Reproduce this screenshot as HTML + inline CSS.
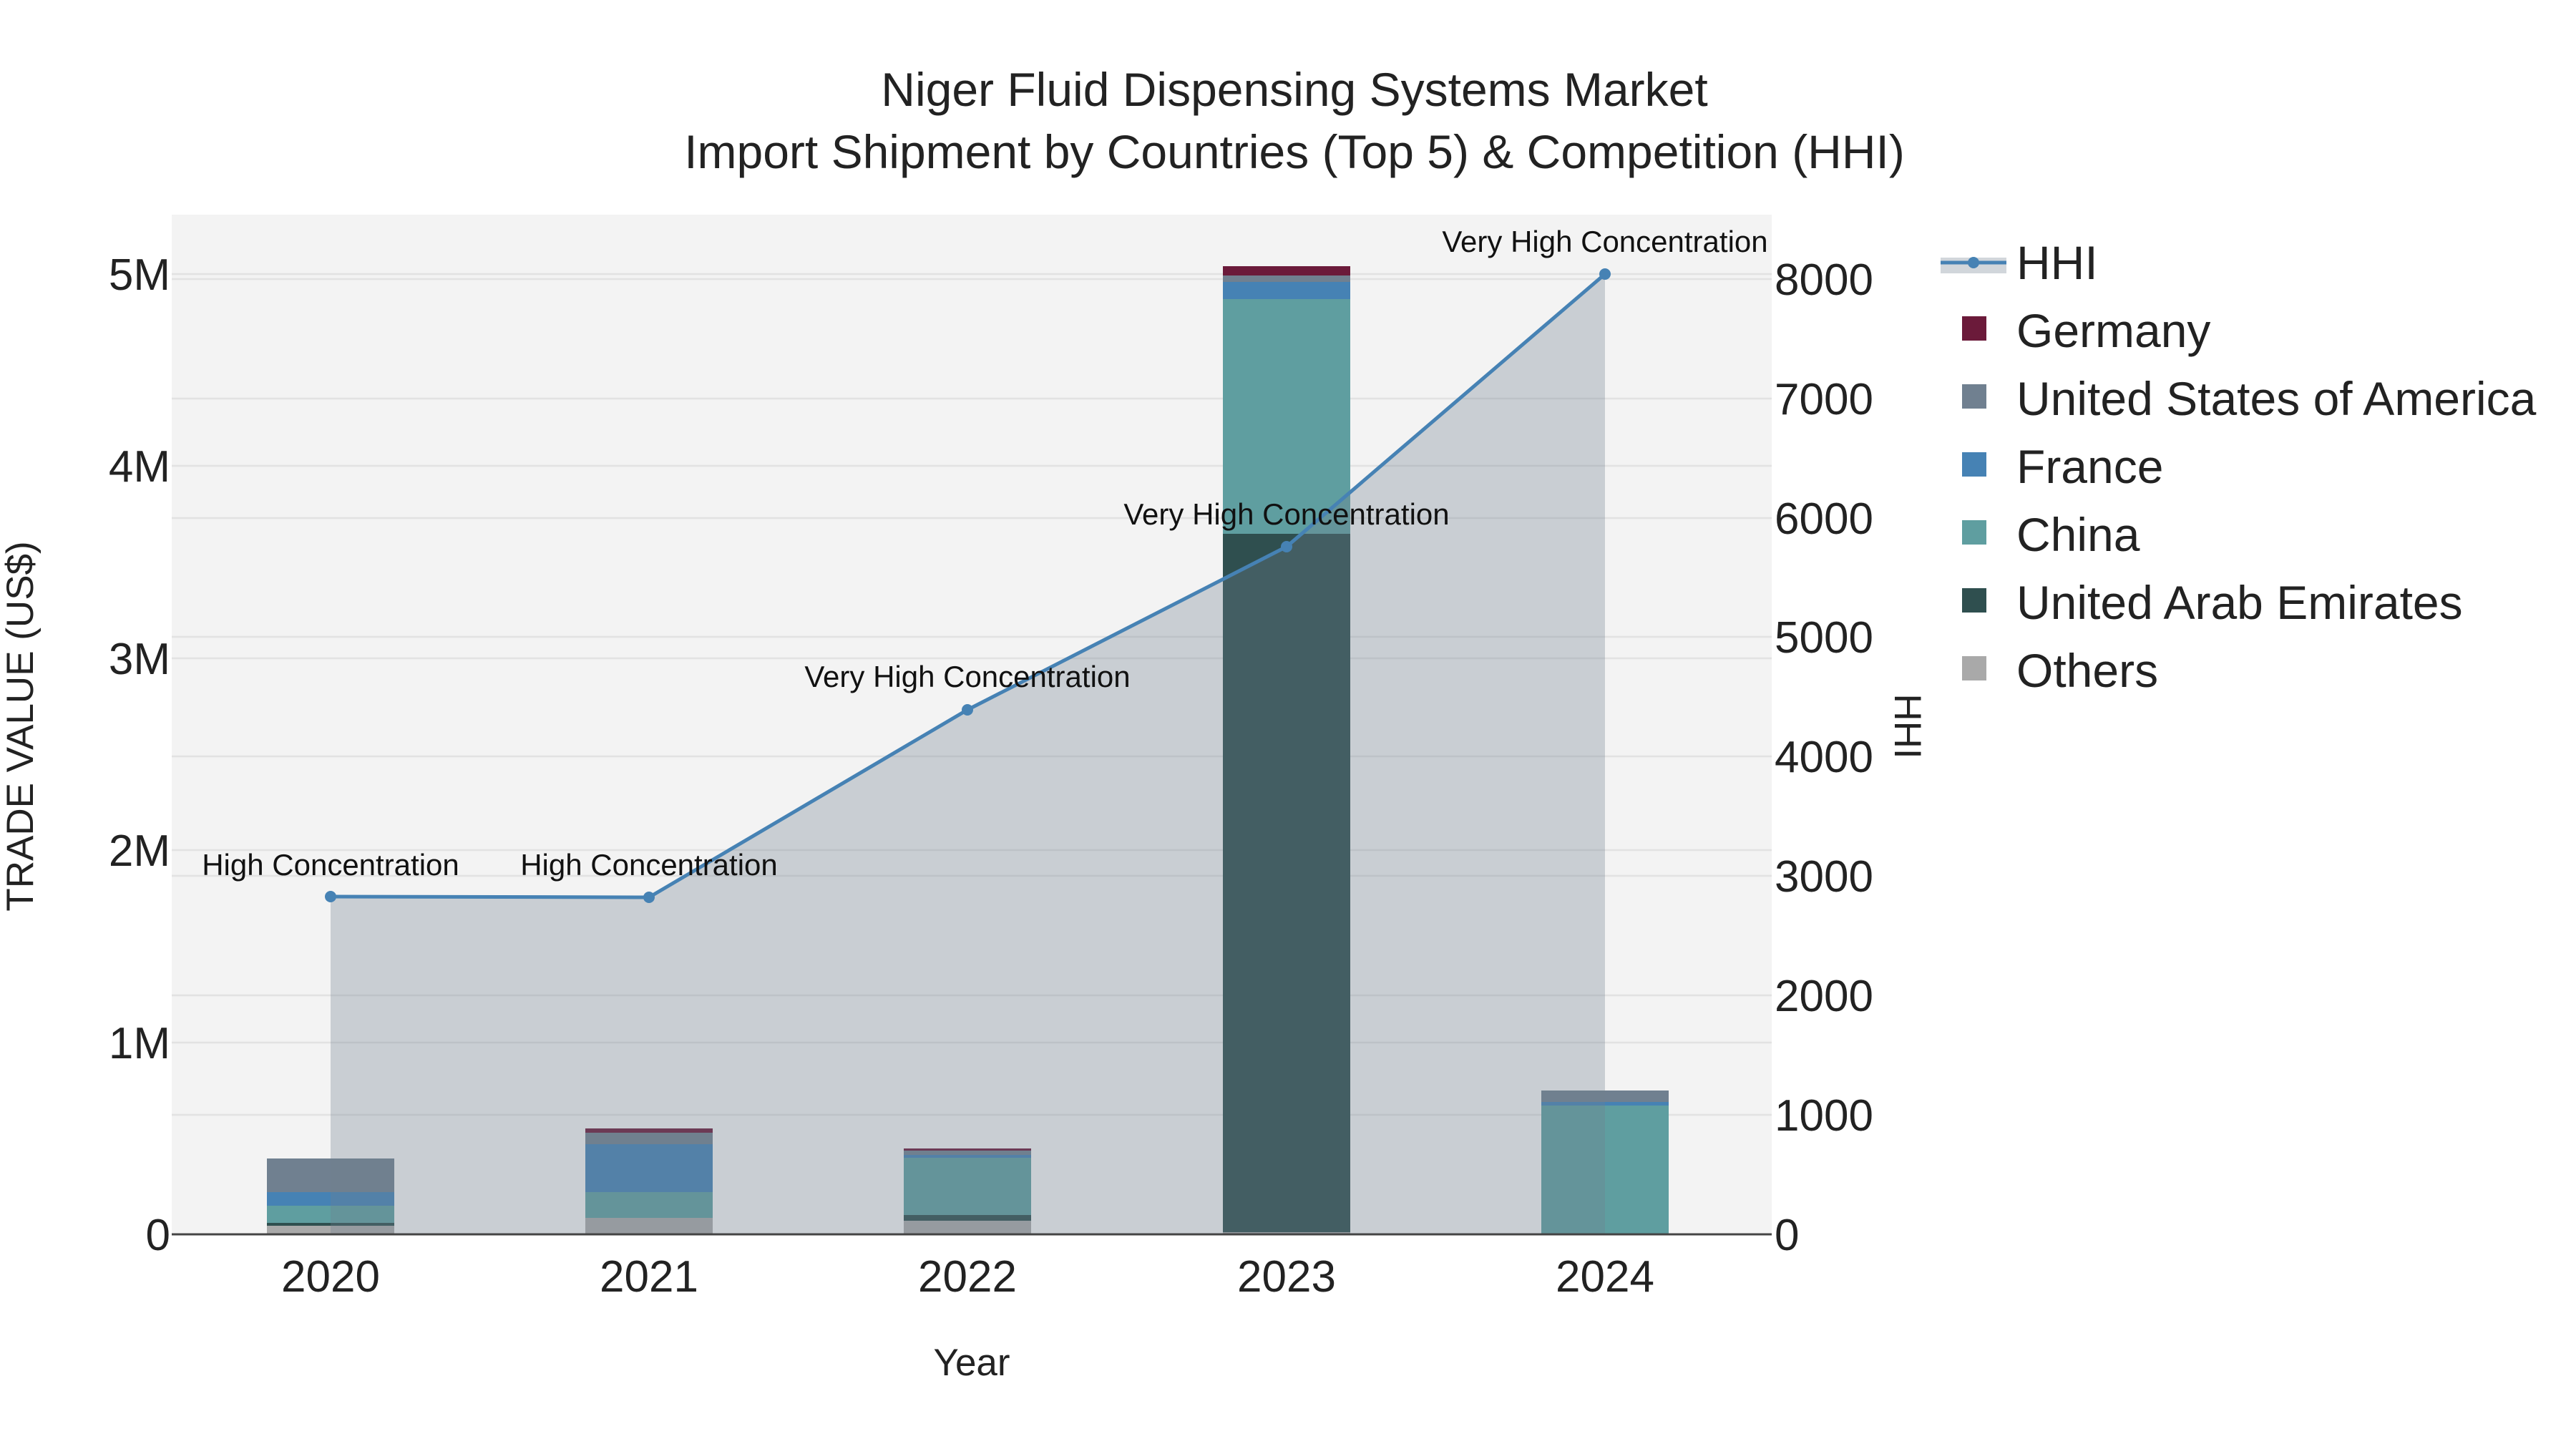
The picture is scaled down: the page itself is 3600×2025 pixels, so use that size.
<!DOCTYPE html>
<html><head><meta charset="utf-8"><style>html,body{margin:0;padding:0;background:#fff}svg{display:block}text{font-family:"Liberation Sans",sans-serif}</style></head><body>
<svg width="3600" height="2025" viewBox="0 0 3600 2025" xmlns="http://www.w3.org/2000/svg">
<rect width="3600" height="2025" fill="#fff"/>
<rect x="240" y="300" width="2236" height="1425" fill="#f3f3f3"/>
<g stroke="#e2e2e2" stroke-width="2.5">
<line x1="240" x2="2476" y1="1457" y2="1457"/><line x1="240" x2="2476" y1="1188" y2="1188"/><line x1="240" x2="2476" y1="920" y2="920"/><line x1="240" x2="2476" y1="651" y2="651"/><line x1="240" x2="2476" y1="383" y2="383"/>
<line x1="240" x2="2476" y1="1558" y2="1558"/><line x1="240" x2="2476" y1="1391" y2="1391"/><line x1="240" x2="2476" y1="1224" y2="1224"/><line x1="240" x2="2476" y1="1057" y2="1057"/><line x1="240" x2="2476" y1="890" y2="890"/><line x1="240" x2="2476" y1="724" y2="724"/><line x1="240" x2="2476" y1="557" y2="557"/><line x1="240" x2="2476" y1="390" y2="390"/>
</g>
<g>
<rect x="373" y="1713" width="178" height="12" fill="#a9a9a9"/><rect x="373" y="1709" width="178" height="4" fill="#2f4f4f"/><rect x="373" y="1685" width="178" height="24" fill="#5f9ea0"/><rect x="373" y="1666" width="178" height="19" fill="#4682b4"/><rect x="373" y="1619" width="178" height="47" fill="#708090"/>
<rect x="818" y="1702" width="178" height="23" fill="#a9a9a9"/><rect x="818" y="1666" width="178" height="36" fill="#5f9ea0"/><rect x="818" y="1599" width="178" height="67" fill="#4682b4"/><rect x="818" y="1583" width="178" height="16" fill="#708090"/><rect x="818" y="1577" width="178" height="6" fill="#6b1a3a"/>
<rect x="1263" y="1706" width="178" height="19" fill="#a9a9a9"/><rect x="1263" y="1698" width="178" height="8" fill="#2f4f4f"/><rect x="1263" y="1618" width="178" height="80" fill="#5f9ea0"/><rect x="1263" y="1614" width="178" height="4" fill="#4682b4"/><rect x="1263" y="1608" width="178" height="6" fill="#708090"/><rect x="1263" y="1605" width="178" height="3" fill="#6b1a3a"/>
<rect x="1709" y="1722" width="178" height="3" fill="#a9a9a9"/><rect x="1709" y="746" width="178" height="976" fill="#2f4f4f"/><rect x="1709" y="418" width="178" height="328" fill="#5f9ea0"/><rect x="1709" y="394" width="178" height="24" fill="#4682b4"/><rect x="1709" y="385" width="178" height="9" fill="#708090"/><rect x="1709" y="372" width="178" height="13" fill="#6b1a3a"/>
<rect x="2154" y="1545" width="178" height="180" fill="#5f9ea0"/><rect x="2154" y="1540" width="178" height="5" fill="#4682b4"/><rect x="2154" y="1524" width="178" height="16" fill="#708090"/>
</g>
<polygon points="462,1725 462,1253 907,1254 1352,992 1798,764 2243,383 2243,1725" fill="rgba(112,128,144,0.32)"/>
<line x1="240" x2="2476" y1="1725" y2="1725" stroke="#444" stroke-width="3"/>
<polyline points="462,1253 907,1254 1352,992 1798,764 2243,383" fill="none" stroke="#4682b4" stroke-width="5"/>
<g fill="#4682b4"><circle cx="462" cy="1253" r="8"/><circle cx="907" cy="1254" r="8"/><circle cx="1352" cy="992" r="8"/><circle cx="1798" cy="764" r="8"/><circle cx="2243" cy="383" r="8"/></g>
<g font-size="42" text-anchor="middle" fill="#111">
<text x="462" y="1223">High Concentration</text><text x="907" y="1223">High Concentration</text><text x="1352" y="960">Very High Concentration</text><text x="1798" y="733">Very High Concentration</text><text x="2243" y="352">Very High Concentration</text>
</g>
<g font-size="66" text-anchor="middle" fill="#222">
<text x="1809" y="148">Niger Fluid Dispensing Systems Market</text>
<text x="1809" y="235">Import Shipment by Countries (Top 5) &amp; Competition (HHI)</text>
</g>
<g font-size="62" text-anchor="end" fill="#222">
<text x="238" y="1747">0</text><text x="238" y="1479">1M</text><text x="238" y="1210">2M</text><text x="238" y="942">3M</text><text x="238" y="673">4M</text><text x="238" y="405">5M</text>
</g>
<g font-size="62" fill="#222">
<text x="2480" y="1747">0</text><text x="2480" y="1580">1000</text><text x="2480" y="1413">2000</text><text x="2480" y="1246">3000</text><text x="2480" y="1079">4000</text><text x="2480" y="912">5000</text><text x="2480" y="746">6000</text><text x="2480" y="579">7000</text><text x="2480" y="412">8000</text>
</g>
<g font-size="62" text-anchor="middle" fill="#222">
<text x="462" y="1805">2020</text><text x="907" y="1805">2021</text><text x="1352" y="1805">2022</text><text x="1798" y="1805">2023</text><text x="2243" y="1805">2024</text>
</g>
<text x="1358" y="1922" font-size="53" text-anchor="middle" fill="#222">Year</text>
<text transform="translate(46,1015) rotate(-90)" font-size="53" text-anchor="middle" fill="#222">TRADE VALUE (US$)</text>
<text transform="translate(2648,1015) rotate(90)" font-size="53" text-anchor="middle" fill="#222">HHI</text>
<rect x="2712" y="360" width="92" height="22" fill="rgba(112,128,144,0.32)"/>
<line x1="2712" x2="2804" y1="367" y2="367" stroke="#4682b4" stroke-width="5"/><circle cx="2758" cy="367" r="8" fill="#4682b4"/>
<g>
<rect x="2742" y="442" width="34" height="34" fill="#6b1a3a"/><rect x="2742" y="537" width="34" height="34" fill="#708090"/><rect x="2742" y="632" width="34" height="34" fill="#4682b4"/><rect x="2742" y="727" width="34" height="34" fill="#5f9ea0"/><rect x="2742" y="822" width="34" height="34" fill="#2f4f4f"/><rect x="2742" y="917" width="34" height="34" fill="#a9a9a9"/>
</g>
<g font-size="66" fill="#222">
<text x="2818" y="390">HHI</text><text x="2818" y="485">Germany</text><text x="2818" y="580">United States of America</text><text x="2818" y="675">France</text><text x="2818" y="770">China</text><text x="2818" y="865">United Arab Emirates</text><text x="2818" y="960">Others</text>
</g>
</svg>
</body></html>
